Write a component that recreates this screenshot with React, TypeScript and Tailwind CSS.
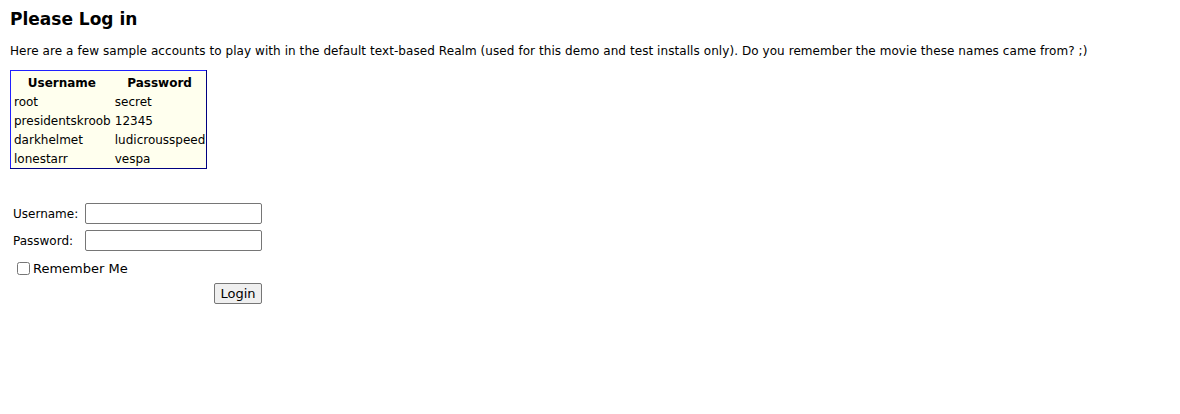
const accounts = [
  ["root", "secret"],
  ["presidentskroob", "12345"],
  ["darkhelmet", "ludicrousspeed"],
  ["lonestarr", "vespa"],
];

export default function App() {
  return (
    <div className="min-h-[414px] bg-white px-[10px] pt-[8px] font-['DejaVu_Sans',Verdana,sans-serif] text-[12px] text-black">
      <h2 className="text-[17px] font-bold leading-[22px]">Please Log in</h2>
      <p className="mt-[14px] leading-[14px] tracking-[0.07px]">
        Here are a few sample accounts to play with in the default text-based Realm (used for this demo and test
        installs only). Do you remember the movie these names came from? ;)
      </p>

      <table className="mt-[12px] border-collapse border border-t-[#2020ff] border-l-[#2020ff] border-b-[#000080] border-r-[#000080] bg-[#ffffee]">
        <thead>
          <tr>
            <th className="h-[22px] px-[3px] pt-[3px] font-bold">Username</th>
            <th className="h-[22px] px-[3px] pt-[3px] font-bold">Password</th>
          </tr>
        </thead>
        <tbody>
          {accounts.map(([user, pass]) => (
            <tr key={user}>
              <td className="h-[19px] pl-[3px] pr-[2px] leading-[14px]">{user}</td>
              <td className="h-[19px] pl-[2px] pr-[1px] leading-[14px]">{pass}</td>
            </tr>
          ))}
        </tbody>
      </table>

      <form className="mt-[34px] w-[252px] pl-[3px]" onSubmit={(e) => e.preventDefault()}>
        <div className="flex items-center">
          <label className="w-[72px]">Username:</label>
          <input
            type="text"
            className="h-[21px] w-[177px] rounded-[2px] border border-[#767676] bg-white px-[2px]"
          />
        </div>
        <div className="mt-[6px] flex items-center">
          <label className="w-[72px]">Password:</label>
          <input
            type="password"
            className="h-[21px] w-[177px] rounded-[2px] border border-[#767676] bg-white px-[2px]"
          />
        </div>
        <div className="mt-[8px] flex items-center pl-[4px]">
          <input type="checkbox" className="m-0 h-[13px] w-[13px]" />
          <span className="ml-[3px] text-[13px]">Remember Me</span>
        </div>
        <div className="mt-[4px] flex justify-end">
          <button
            type="submit"
            className="h-[21px] w-[48px] rounded-[2px] border border-[#767676] bg-[#efefef] text-[13px] leading-[19px]"
          >
            Login
          </button>
        </div>
      </form>
    </div>
  );
}
